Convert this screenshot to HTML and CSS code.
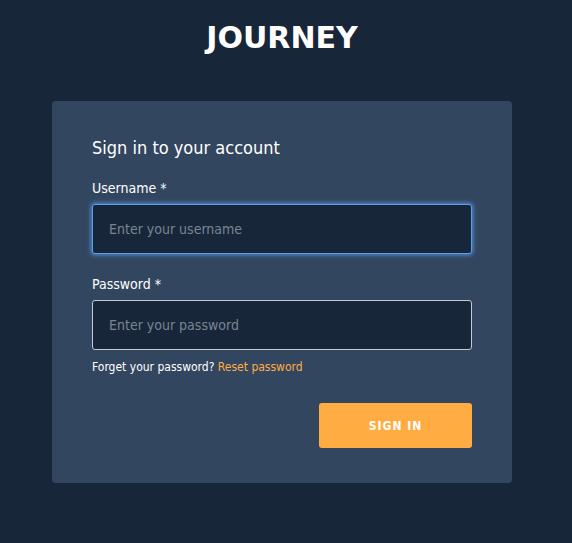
FILE: index.html
```html
<!DOCTYPE html>
<html lang="en">
<head>
  <meta charset="UTF-8">
  <meta name="viewport" content="width=device-width, initial-scale=1.0">
  <title>Journey - Sign in</title>
  <link rel="stylesheet" href="styles.css">
</head>
<body>
  <div class="page">
    <h1 class="logo">JOURNEY</h1>

    <form class="card">
      <h2>Sign in to your account</h2>

      <label class="field-label" for="username">Username *</label>
      <input class="field focused" id="username" type="text" placeholder="Enter your username">

      <label class="field-label" for="password">Password *</label>
      <input class="field" id="password" type="password" placeholder="Enter your password">

      <p class="forgot">Forget your password? <a href="#">Reset password</a></p>

      <div class="actions">
        <button type="button" class="btn-signin">SIGN IN</button>
      </div>
    </form>
  </div>
</body>
</html>
```

FILE: styles.css
```css
body {
  margin: 0;
  font-family: "DejaVu Sans Condensed", "DejaVu Sans", sans-serif;
  background-color: #172739;
  color: white;
}

.page {
  display: flex;
  flex-direction: column;
  align-items: center;
  padding: 20px 8px 0 0;
}

.logo {
  margin: 0 0 45px 0;
  font-family: "DejaVu Sans", sans-serif;
  font-size: 30px;
  font-weight: bold;
  line-height: 36px;
}

.card {
  background-color: #334660;
  width: 380px;
  padding: 36px 40px 35px 40px;
  border-radius: 4px;
  display: flex;
  flex-direction: column;
}

.card h2 {
  margin: 0 0 21px 0;
  font-size: 18px;
  font-weight: normal;
  line-height: 22px;
}

.field-label {
  font-size: 14px;
  line-height: 17px;
  margin-bottom: 7px;
}

.field {
  box-sizing: border-box;
  height: 50px;
  margin: 0 0 22px 0;
  padding: 0 16px;
  background-color: #172739;
  border: 1px solid #c4cad2;
  border-radius: 3px;
  color: white;
  font-family: inherit;
  font-size: 14px;
  outline: none;
}

.field::placeholder {
  color: #7a8591;
}

.field.focused {
  border-color: #5b9de6;
  box-shadow: 0 0 4px 1px #4f8fda;
}

.forgot {
  margin: -12px 0 0 0;
  font-size: 12px;
  line-height: 15px;
}

.forgot a {
  color: #ffac42;
  text-decoration: none;
}

.actions {
  display: flex;
  justify-content: flex-end;
  margin-top: 28px;
}

.btn-signin {
  width: 153px;
  height: 45px;
  background-color: #ffad42;
  color: white;
  border: none;
  border-radius: 3px;
  font-family: inherit;
  font-size: 12px;
  font-weight: bold;
  letter-spacing: 1px;
  cursor: pointer;
}
```
